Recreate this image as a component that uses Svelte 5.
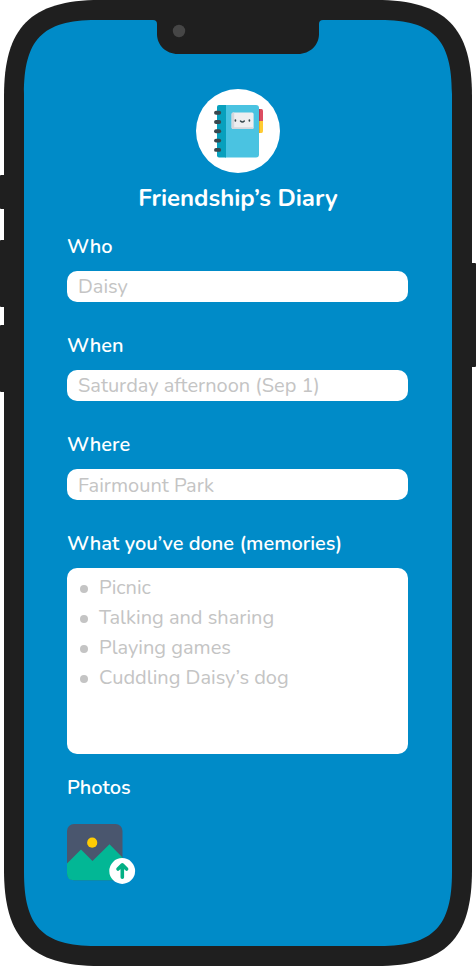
<script>
  const fields = [
    { id: 'who', label: 'Who', hint: 'Daisy' },
    { id: 'when', label: 'When', hint: 'Saturday afternoon (Sep 1)' },
    { id: 'where', label: 'Where', hint: 'Fairmount Park' }
  ];
  const memories = ['Picnic', 'Talking and sharing', 'Playing games', 'Cuddling Daisy’s dog'];
  const rings = [112.7, 122, 131.3, 140.6, 149.9];
</script>

<main class="phone">
  <svg class="shell" width="476" height="966" viewBox="0 0 476 966" aria-hidden="true">
    <g fill="#1f1f1f">
      <rect x="0" y="175" width="8" height="34" rx="1" />
      <rect x="0" y="240" width="8" height="67" rx="1" />
      <rect x="0" y="325" width="8" height="67" rx="1" />
      <rect x="468" y="263" width="8" height="104" rx="1" />
      <path d="M4 96C4 28 30 0 100 0H376C446 0 472 28 472 96V870C472 938 446 966 376 966H100C30 966 4 938 4 870Z" />
    </g>
    <path fill="#008bc8" d="M24 94C24 40 42 20 96 20H153Q157 20 157 24V34C157 45 166 54 178 54H298C310 54 319 45 319 34V24Q319 20 323 20H380C434 20 452 40 452 94V872C452 926 434 946 380 946H96C42 946 24 926 24 872Z" />
    <circle cx="179" cy="31" r="6.2" fill="#464646" />
  </svg>

  <div class="screen">
    <svg class="logo" width="84" height="84" viewBox="196 89 84 84" aria-hidden="true">
      <circle cx="238" cy="131" r="42" fill="#fff" />
      <path fill="#dc4d61" d="M258 109h3.500q1.500 0 1.500 2v10H258z" />
      <path fill="#ffcb32" d="M258 121h5v10q0 2-1.500 2H258z" />
      <path fill="#b63a50" d="M258 109h2v12h-2z" />
      <path fill="#e8ae22" d="M258 121h2v12h-2z" />
      <path fill="#4ac3e1" d="M225 105h31q3 0 3 3v46.500q0 3-3 3h-31z" />
      <path fill="#08a0bd" d="M219 105h7v52.500h-7q-2 0-2-2v-48.500q0-2 2-2z" />
      <rect x="231.600" y="112.500" width="22" height="16.500" rx="1.600" fill="#eeeef0" />
      <path fill="#d5d7dc" d="M233.200 112.500h1v14.700h19.300v.300q0 1.500-1.500 1.500h-18.800q-1.600 0-1.600-1.600v-13.300q0-1.600 1.600-1.600z" />
      <g stroke="#37474c" stroke-linecap="round" fill="none">
        <path stroke-width="1.700" d="M235.400 120v.8M249.400 120v.8" />
        <path stroke-width="1.500" d="M240.500 121q1.900 2 3.800 0" />
      </g>
      {#each rings as y}
        <path d="M216 {y}h3.200" stroke="#38474e" stroke-width="3.900" stroke-linecap="round" />
      {/each}
    </svg>
    <h1>Friendship’s Diary</h1>

    {#each fields as f}
      <label for={f.id}>{f.label}</label>
      <input id={f.id} type="text" placeholder={f.hint} />
    {/each}

    <h2 class="memories-title">What you’ve done (memories)</h2>
    <ul>
      {#each memories as memory}
        <li><i></i>{memory}</li>
      {/each}
    </ul>

    <h2 class="photos-title">Photos</h2>
    <button aria-label="Add photo">
      <svg width="69" height="61" viewBox="67 824 69 61">
        <rect x="67" y="824" width="55.500" height="56.300" rx="7" fill="#4a566e" />
        <circle cx="92.200" cy="842.700" r="5.100" fill="#ffcc03" />
        <path fill="#02b795" d="M67 863.500L81 849.500L92.500 861L109.500 844.300L122.500 857.500V873.300Q122.500 880.300 115.500 880.300H74Q67 880.300 67 873.300Z" />
        <circle cx="122.200" cy="871" r="12.900" fill="#fff" />
        <path d="M122.300 877.200V865.500M118 869L122.300 864.900L126.600 869" fill="none" stroke="#02b084" stroke-width="3.600" stroke-linecap="round" stroke-linejoin="round" />
      </svg>
    </button>
  </div>
</main>

<style>
  :global(body) {
    margin: 0;
    background: #fff;
  }
  .phone {
    display: grid;
    width: 476px;
    height: 966px;
    overflow: hidden;
    font-family: Nunito, 'Open Sans', 'Noto Sans', sans-serif;
    font-size: 20px;
    color: #fff;
  }
  .shell,
  .screen {
    grid-area: 1 / 1;
  }
  .screen {
    z-index: 1;
    box-sizing: border-box;
    display: flex;
    flex-direction: column;
    padding: 89px 68px 0 67px;
  }
  .logo {
    display: block;
    align-self: center;
    flex: none;
  }
  h1 {
    align-self: center;
    margin: 9px 0 17px 1px;
    height: 32px;
    font-size: 24px;
    line-height: 32px;
    font-weight: 700;
    white-space: nowrap;
  }
  label,
  h2 {
    display: block;
    margin: 0;
    height: 30px;
    font-size: 20px;
    font-weight: 600;
    line-height: 30px;
    white-space: nowrap;
  }
  label {
    margin-top: 1px;
    margin-bottom: 9px;
  }
  input {
    box-sizing: border-box;
    width: 341px;
    height: 31px;
    margin: 0 0 28px;
    padding: 0 11px;
    border: 0;
    border-radius: 10px;
    background: #fff;
    color: #555;
    font: 400 20px Nunito, 'Open Sans', 'Noto Sans', sans-serif;
  }
  #where {
    padding-top: 2px;
  }
  input::placeholder {
    color: #c4c4c4;
    opacity: 1;
  }
  .memories-title {
    margin: 1px 0 9px;
  }
  ul {
    box-sizing: border-box;
    width: 341px;
    height: 186px;
    margin: 0;
    padding: 5px 13px;
    border-radius: 10px;
    background: #fff;
    list-style: none;
    color: #c4c4c4;
    font-size: 20px;
    font-weight: 400;
  }
  li {
    display: flex;
    align-items: center;
    height: 30px;
    line-height: 30px;
    white-space: nowrap;
  }
  i {
    width: 8px;
    height: 8px;
    margin: 1px 11px 0 0;
    border-radius: 50%;
    background: #c4c4c4;
  }
  .photos-title {
    margin: 19px 0 21px;
  }
  button {
    width: 69px;
    height: 61px;
    padding: 0;
    border: 0;
    background: none;
  }
  button svg {
    display: block;
  }
</style>
